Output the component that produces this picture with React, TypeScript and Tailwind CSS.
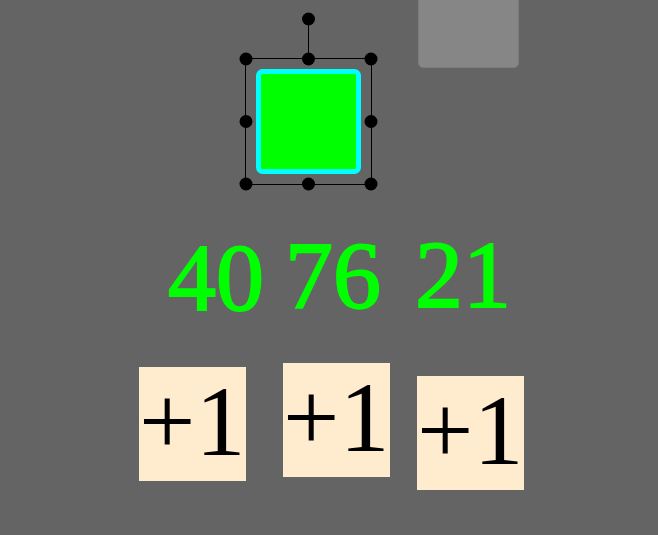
const HANDLES = [
  [78, 19], [16, 59], [78, 59], [141, 59], [16, 121], [141, 121], [16, 184], [78, 184], [141, 184],
];

const COUNTERS = [
  { value: 40, place: "left-[168px] top-[230px]" },
  { value: 76, place: "left-[285px] top-[228px]" },
  { value: 21, place: "left-[415px] top-[227px]" },
];

const BUTTONS = [
  { label: "Add one to first counter", place: "left-[139px] top-[367px]" },
  { label: "Add one to second counter", place: "left-[283px] top-[363px]" },
  { label: "Add one to third counter", place: "left-[417px] top-[376px]" },
];

function Selection() {
  return (
    <div className="absolute left-[230px] top-0">
      <svg width="160" height="200" aria-hidden="true">
        <path d="M78.5 19V59M16 58.5H141.5V184.5H15.5V58.5Z" fill="none" stroke="black" />
        <rect x="28.5" y="71.5" width="100" height="100" rx="4" fill="#00ff00" stroke="#00ffff" strokeWidth="5" />
        {HANDLES.map(([x, y]) => (
          <circle key={`${x}-${y}`} cx={x === 78 ? 78.5 : x} cy={y === 121 ? 121.5 : y} r="6.5" />
        ))}
      </svg>
    </div>
  );
}

export default function App() {
  return (
    <main className="relative min-h-screen w-full overflow-hidden bg-[#646464] font-['Liberation_Serif',serif] leading-none">
      <div className="absolute left-[418px] top-[-33px] size-[101px] rounded-[5px] border border-[#7c7c7c] bg-[#868686]" />
      <Selection />
      {COUNTERS.map((c) => (
        <output
          key={c.value}
          className={`absolute text-[96px] leading-none text-[#00ff00] [-webkit-text-stroke:2px_#00ff00] ${c.place}`}
        >
          {c.value}
        </output>
      ))}
      {BUTTONS.map((b) => (
        <button
          key={b.label}
          type="button"
          aria-label={b.label}
          className={`absolute h-[114px] w-[107px] bg-[#ffebcd] pb-1 text-left text-[100px] leading-none text-black ${b.place}`}
        >
          +1
        </button>
      ))}
    </main>
  );
}
